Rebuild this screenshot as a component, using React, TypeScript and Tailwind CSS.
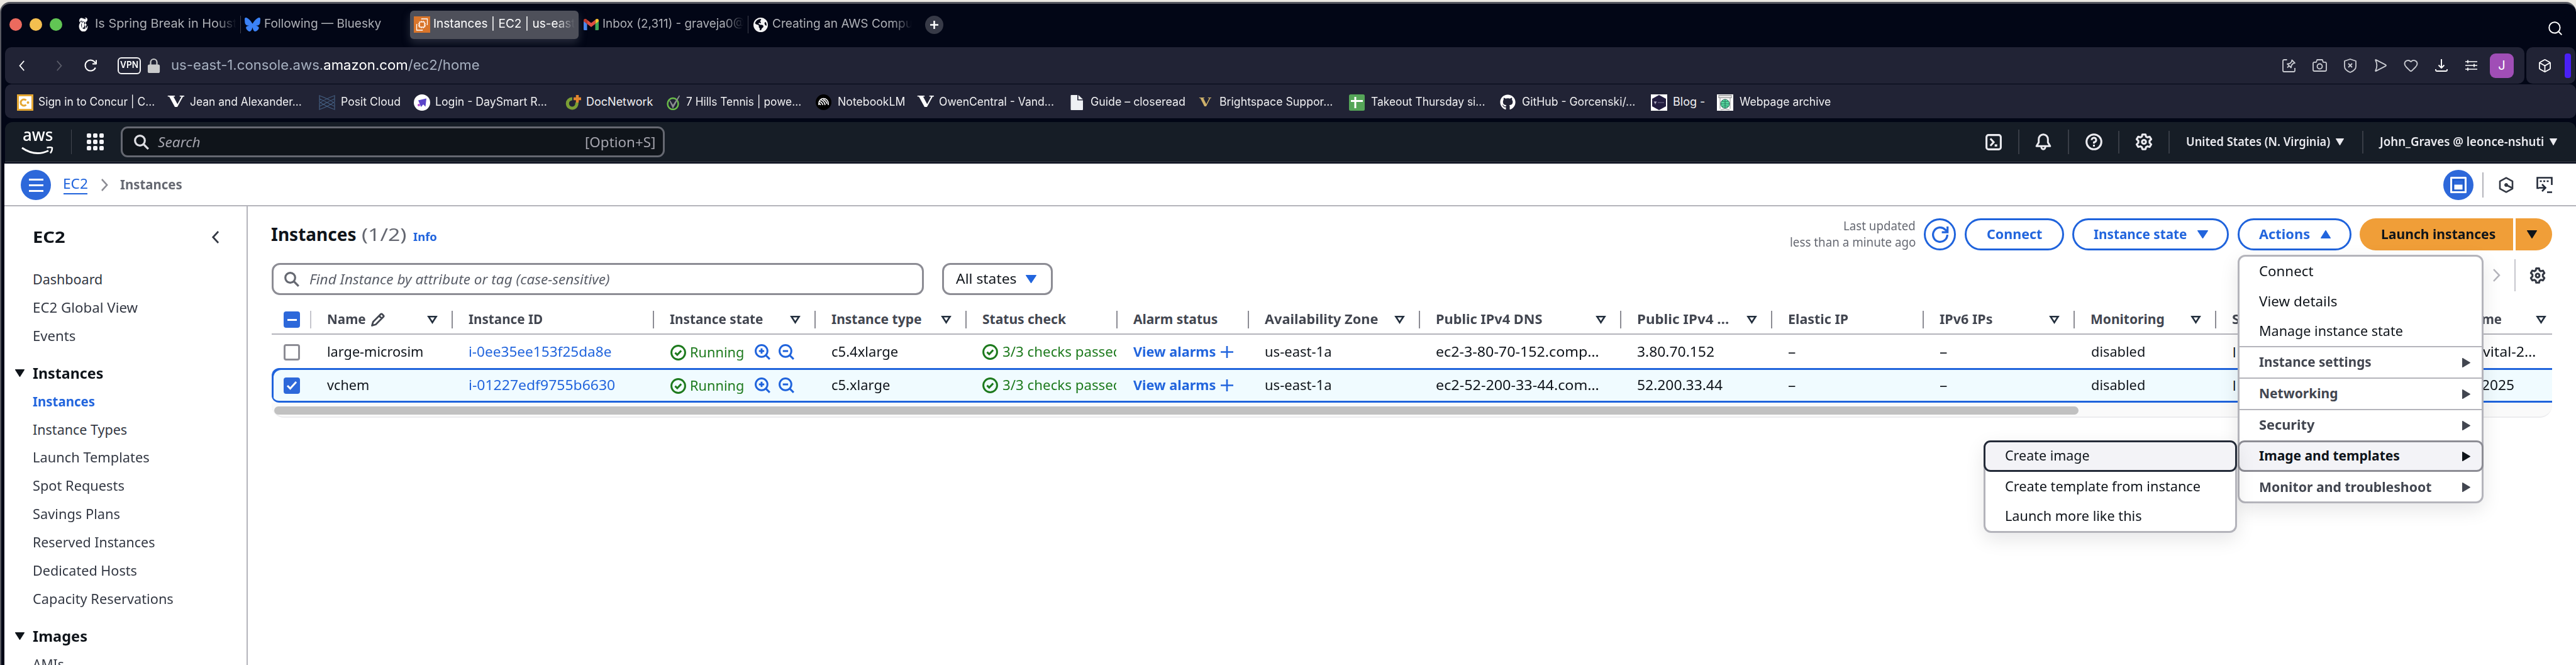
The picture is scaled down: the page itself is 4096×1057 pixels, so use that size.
import { useLayoutEffect, useRef, useState } from "react";
import type { ReactNode } from "react";
import clsx from "clsx";
import { FaBluesky, FaEarthAmericas } from "react-icons/fa6";
import { FaGithub } from "react-icons/fa";
import { SiNewyorktimes } from "react-icons/si";
import { Heart, Box, Search } from "lucide-react";

/* A single line of text condensed or widened to its box's width; the extra
   pixels make up for the side bearings of the first and last letters. */
function Fit({ className, children }: { className: string; children: ReactNode }) {
  const outer = useRef<HTMLSpanElement>(null);
  const inner = useRef<HTMLSpanElement>(null);
  const [scale, setScale] = useState(1);
  useLayoutEffect(() => {
    if (outer.current && inner.current) {
      const natural = inner.current.offsetWidth;
      if (natural > 0) setScale((outer.current.clientWidth + 2) / natural);
    }
  }, []);
  return (
    <span ref={outer} className={clsx("block shrink-0 whitespace-nowrap", className)}>
      <span ref={inner} className="relative -top-px -ml-px inline-block origin-left align-top" style={{ transform: `scaleX(${scale})` }}>
        {children}
      </span>
    </span>
  );
}

type IconProps = { className?: string };

function Svg({ className, box = "0 0 16 16", sw = 2, children }: { className?: string; box?: string; sw?: number; children: ReactNode }) {
  return (
    <svg viewBox={box} fill="none" stroke="currentColor" strokeWidth={sw} strokeLinejoin="round" preserveAspectRatio="none" className={clsx("shrink-0 overflow-visible", className)}>
      {children}
    </svg>
  );
}

const CaretDown = ({ className }: IconProps) => (
  <Svg className={className} box="0 0 12 10" sw={1}><path d="M.5.5h11L6 9.5z" fill="currentColor" /></Svg>
);
const CaretRight = ({ className }: IconProps) => (
  <Svg className={className} box="0 0 10 12" sw={1}><path d="M.5.5v11L9.5 6z" fill="currentColor" /></Svg>
);
const FilterCaret = ({ className }: IconProps) => (
  <Svg className={clsx("h-3 w-[15px] text-[#232f3e]", className)} box="0 0 15 12" sw={2.6}><path d="M1.5 1.3h12L7.5 10.5z" strokeLinejoin="miter" /></Svg>
);
const Magnifier = ({ className }: IconProps) => (
  <Svg className={className} box="0 0 24 24" sw={3.2}><circle cx="9.5" cy="9.5" r="7.8" /><path d="M15 15l7.8 7.8" /></Svg>
);
const Gear = ({ className, sw = 1.8 }: IconProps & { sw?: number }) => (
  <Svg className={className} box="0 0 16 16" sw={sw}>
    <path d="M6.6 1h2.8l.5 2 1.3.75 2-.6 1.4 2.4-1.5 1.45v1.9l1.5 1.5-1.4 2.4-2-.6-1.3.75-.5 2H6.6l-.5-2-1.3-.75-2 .6L1.4 10.4 2.9 8.9V7.05L1.4 5.55l1.4-2.4 2 .6L6.1 3z" />
    <circle cx="8" cy="8" r="1.8" />
  </Svg>
);
const CheckCircle = ({ className }: IconProps) => (
  <Svg className={clsx("h-[25px] w-[25px] text-[#1d7a1d]", className)} sw={1.9}>
    <circle cx="8" cy="8" r="7" /><path d="M4.8 8.1l2.2 2.2 4-4.3" />
  </Svg>
);
const Zoom = ({ plus, className }: { plus?: boolean; className?: string }) => (
  <Svg className={clsx("h-[25px] w-[25px] text-[#1f63dc]", className)} box="0 0 16 16" sw={1.9}>
    <circle cx="7" cy="7" r="6" /><path d="M11.3 11.3l4 4M4.3 7h5.4" />{plus && <path d="M7 4.3v5.4" />}
  </Svg>
);
const Refresh = ({ className }: IconProps) => (
  <Svg className={className} sw={2}><path d="M15 8a7 7 0 1 1-2-4.9L15 5.4" strokeLinejoin="miter" /><path d="M15.2 0v5.6H9.6" strokeLinejoin="miter" /></Svg>
);
const Chevron = ({ className, left, sw = 2.4 }: IconProps & { left?: boolean; sw?: number }) => (
  <Svg className={className} box="0 0 12 20" sw={sw}><path d={left ? "M11 1L2 10l9 9" : "M1 1l9 9-9 9"} strokeLinejoin="miter" /></Svg>
);

/* ---------- browser chrome ---------- */

function TabStrip() {
  return (
    <div className="flex h-[69px] items-center pb-[3px] pl-[15px] text-[19px] leading-[26px] text-[#aeb0b6]">
      <i className="size-5 rounded-full bg-[#ec6a5e]" />
      <i className="ml-3 size-5 rounded-full bg-[#f4bf4f]" />
      <i className="ml-3 size-5 rounded-full bg-[#61c554]" />
      <SiNewyorktimes className="ml-[25px] h-[22px] w-[17px] shrink-0 text-white" stroke="currentColor" strokeWidth="0.8" preserveAspectRatio="none" />
      <Fit className="ml-[11px] w-[224px] [mask-image:linear-gradient(to_right,black_86%,transparent)]">Is Spring Break in Houst</Fit>
      <i className="ml-[6px] h-7 w-px bg-[#3c3f4c]" />
      <FaBluesky className="ml-[6px] h-6 w-[25px] shrink-0 text-[#3b82f7]" />
      <Fit className="ml-[7px] w-[184px]">Following — Bluesky</Fit>
      <div className="ml-[47px] flex h-[45px] w-[268px] shrink-0 items-center rounded-md bg-[#4e505a] pl-[6px] text-white shadow-[0_6px_14px_rgba(110,115,130,0.35)]">
        <svg viewBox="0 0 26 26" className="size-[26px] shrink-0" fill="none" stroke="#fff" strokeWidth="1.3">
          <rect width="26" height="26" fill="#d9752b" stroke="none" />
          <rect x="9" y="9" width="8" height="8" /><path d="M12 9V7M15 9V7M12 19v-2M15 19v-2M9 12H7M9 15H7M19 12h-2M19 15h-2" />
          <path d="M12.5 5V4h9v9h-1M13.500 21v1h-9v-9h1" />
        </svg>
        <Fit className="ml-[6px] w-[224px] [mask-image:linear-gradient(to_right,black_86%,transparent)]">Instances | EC2 | us-east</Fit>
      </div>
      <svg viewBox="0 0 24 18" preserveAspectRatio="none" className="ml-2 h-[18px] w-6 shrink-0">
        <path d="M0 2.500V16.500Q0 18 1.500 18H5.500V8z" fill="#4a86ee" />
        <path d="M24 2.500V16.500Q24 18 22.500 18H18.500V8z" fill="#3fa757" />
        <path d="M18.500 1.500V8L24 4V2.500C24 0 21 -.8 19.500 .6z" fill="#f4bd2f" />
        <path d="M0 2.500V4l5.500 4V1.500L4.500.6C3 -.8 0 0 0 2.500z" fill="#bd3a2e" />
        <path d="M5.500 1.500L12 6.500l6.500-5V8L12 13 5.500 8z" fill="#dd4f43" />
      </svg>
      <Fit className="ml-[7px] w-[224px] [mask-image:linear-gradient(to_right,black_86%,transparent)]">Inbox (2,311) - graveja0@</Fit>
      <i className="ml-[6px] h-7 w-px bg-[#3c3f4c]" />
      <FaEarthAmericas className="ml-2 size-[23px] shrink-0 text-[#f2f2f3]" />
      <Fit className="ml-2 w-[221px] [mask-image:linear-gradient(to_right,black_86%,transparent)]">Creating an AWS Compu</Fit>
      <div className="ml-[21px] flex size-[29px] items-center justify-center rounded-full bg-[#373a47] text-white">
        <Svg className="size-[13px]" box="0 0 12 12" sw={2.4}><path d="M6 0v12M0 6h12" /></Svg>
      </div>
      <Search className="mr-5 ml-auto mt-3 size-[26px] text-white" strokeWidth={1.8} />
    </div>
  );
}

function AddressBar() {
  return (
    <div className="flex h-[58px] gap-[3px] pr-px pl-2 text-[#c9cbd1]">
      <div className="flex w-[4006px] items-center rounded-[10px] bg-[#212335] pr-[17px] pl-[22px]">
        <Chevron left className="h-[17px] w-[9px] text-white" sw={2.2} />
        <Chevron className="ml-[51px] h-[17px] w-[9px] text-[#5b5d6a]" sw={2.2} />
        <Svg className="ml-[35px] size-5 text-white" box="0 0 20 20" sw={2}><path d="M17.800 13.500A8.500 8.500 0 1 1 17.600 6.200" /><path d="M19 1.500v6h-6" /></Svg>
        <div className="ml-[33px] flex h-[27px] w-[37px] items-center justify-center rounded-[6px] border-2 border-[#f3f3f5] text-white">
          <Fit className="w-[27px] text-[15px] leading-[20px] font-semibold">VPN</Fit>
        </div>
        <Svg className="ml-[11px] h-[23px] w-[19px] text-[#c9cacb]" box="0 0 19 23" sw={2.2}><path d="M4.500 11V6a5 5 0 0 1 10 0v5" /><rect x="1" y="10.500" width="17" height="11.500" rx="1.500" fill="currentColor" /></Svg>
        <Fit className="ml-[19px] w-[489px] text-[21.500px] leading-[30px] text-[#a6b0c0]">us-east-1.console.aws.<span className="text-white">amazon.com</span>/ec2/home</Fit>
        <Svg className="ml-auto size-[21px]" box="0 0 21 21" sw={1.8}>
          <path d="M7.500 1H3Q1 1 1 3v15q0 2 2 2h15q2 0 2-2v-4" />
          <path d="M8 13.500l3.300-3.300M15.300 1.500l4.700 4.700-2.500.5-2.800 2.800-.8 4L8 7.600l4.200-.7 2.600-2.800z" />
        </Svg>
        <Svg className="ml-[27px] h-5 w-[23px]" box="0 0 23 20" sw={1.8}><path d="M3 4.800h3L7.300 1h8.400L17 4.800h3q2 0 2 2V17q0 2-2 2H3q-2 0-2-2V6.800q0-2 2-2z" /><circle cx="11.500" cy="11.500" r="4" /></Svg>
        <Svg className="ml-[27px] h-[23px] w-5" box="0 0 20 23" sw={1.8}><path d="M10 1l9 3v8.500c0 5-5 8-9 9.500-4-1.500-9-4.500-9-9.500V4z" /><path d="M7 8l6 6M13 8l-6 6" /></Svg>
        <Svg className="ml-[29px] h-5 w-[19px]" box="0 0 19 20" sw={1.8}><path d="M1.200 1.500Q1 .8 2 1.100L17 8.900Q19 10 17 11.100L2 18.900Q1 19.300 1.200 18.500Q5.500 10 1.200 1.500z" /></Svg>
        <Heart className="ml-[26px] h-[24px] w-[25px] shrink-0" strokeWidth={1.9} />
        <Svg className="ml-[26px] h-5 w-5 text-white" box="0 0 20 20" sw={1.9}><path d="M10 0v14M5.500 9.500L10 14l4.500-4.500M1 16v1.500Q1 19 2.500 19h15q1.500 0 1.500-1.500V16" /></Svg>
        <Svg className="ml-7 h-[18px] w-[19px] text-white" box="0 0 19 18" sw={1.7}><path d="M0 3h19M0 9h19M0 15h19M4 .5v5M14 6.500v5M4 12.500v5" /></Svg>
        <div className="ml-5 flex h-[39px] w-[38px] items-center justify-center rounded-[9px] bg-[#a04eb6] text-[20px] leading-none text-white">J</div>
      </div>
      <div className="flex w-[78px] items-center rounded-[10px] bg-[#212335] pl-[18px]">
        <Box className="size-[23px] shrink-0 text-white" strokeWidth={1.8} />
        <i className="ml-5 h-[39px] w-[10px] rounded-[4px] bg-[#4a20f5]" />
      </div>
    </div>
  );
}

function BookmarksBar() {
  return (
    <div className="mt-px ml-2 flex h-[54px] items-center rounded-[10px] bg-[#212335] pt-[3px] pl-[19px] text-[18px] leading-[26px] text-[#f0f0f2]">
      <svg viewBox="0 0 26 26" className="size-[26px] shrink-0" fill="none"><rect x="1.500" y="1.500" width="23" height="23" fill="#fff" stroke="#e5a733" strokeWidth="3" /><path d="M14.500 9.500A5 5 0 1 0 14.500 16.500" stroke="#e5a733" strokeWidth="3" /><circle cx="17.500" cy="13" r="2" fill="#e5a733" /></svg>
      <Fit className="ml-[9px] w-[183px]">Sign in to Concur | C...</Fit>
      <Fit className="ml-[23px] w-[23px] font-['DejaVu_Serif'] text-[25px] font-bold text-white">V</Fit>
      <Fit className="ml-3 w-[176px]">Jean and Alexander...</Fit>
      <svg viewBox="0 0 26 24" className="ml-7 h-6 w-[26px] shrink-0" fill="none" stroke="#41597a" strokeWidth="1.300"><path d="M1 1q12 4 24 12v10q-12-4-24-12zM25 1Q13 5 1 13v10q12-4 24-12zM1 6l24 12M25 6L1 18" /></svg>
      <Fit className="ml-[10px] w-[93px]">Posit Cloud</Fit>
      <svg viewBox="0 0 26 26" className="ml-[22px] size-[26px] shrink-0"><circle cx="13" cy="13" r="13" fill="#fff" /><path d="M7 9.500L20 6.500 18.500 19.500 15 16 11.500 20z" fill="#5b45c9" /><circle cx="8" cy="17" r="2" fill="#b34ed0" /></svg>
      <Fit className="ml-[9px] w-[176px]">Login - DaySmart R...</Fit>
      <svg viewBox="0 0 25 24" className="ml-[30px] h-6 w-[25px] shrink-0" fill="none"><path d="M11 6A7.500 7.500 0 1 0 18 11.500" stroke="#7b9f35" strokeWidth="5" /><path d="M19 0v12M13 6h12" stroke="#e3862f" strokeWidth="4.500" /></svg>
      <Fit className="ml-[9px] w-[104px]">DocNetwork</Fit>
      <svg viewBox="0 0 21 24" className="ml-[23px] h-6 w-[21px] shrink-0" fill="none"><ellipse cx="10" cy="14" rx="8.500" ry="9" stroke="#6cc04a" strokeWidth="2.400" /><path d="M5 9l5 8L20.500 1 10 20z" stroke="#8a8d90" strokeWidth="1.500" fill="#8a8d90" /></svg>
      <Fit className="ml-[11px] w-[181px]">7 Hills Tennis | powe...</Fit>
      <svg viewBox="0 0 25 25" className="ml-6 size-[25px] shrink-0" fill="none" stroke="#fff" strokeWidth="1.600"><circle cx="12.500" cy="12.500" r="12.500" fill="#000" stroke="none" /><path d="M5 17v-3a7.500 7.500 0 0 1 15 0v3M8 17a6 6 0 0 0-3-3M11.500 17A8.500 8.500 0 0 0 5.500 11M15 17a11 11 0 0 0-7-8.500M18 15a11 11 0 0 0-6-7" /></svg>
      <Fit className="ml-[11px] w-[106px]">NotebookLM</Fit>
      <Fit className="ml-[21px] w-[23px] font-['DejaVu_Serif'] text-[25px] font-bold text-white">V</Fit>
      <Fit className="ml-[11px] w-[181px]">OwenCentral - Vand...</Fit>
      <svg viewBox="0 0 20 24" className="ml-[27px] h-6 w-5 shrink-0"><path d="M.5 1q0-1 1-1H11v8.500h9V23q0 1-1 1H1.500q-1 0-1-1z" fill="#eef1f4" /><path d="M12.700 0L20 7h-7.300z" fill="#eef1f4" /></svg>
      <Fit className="ml-[13px] w-[149px]">Guide – closeread</Fit>
      <Fit className="ml-6 w-[17px] font-['DejaVu_Serif'] text-[19px] font-bold text-[#cdb06a]">V</Fit>
      <Fit className="ml-[15px] w-[178px]">Brightspace Suppor...</Fit>
      <svg viewBox="0 0 25 26" className="ml-[27px] h-[26px] w-[25px] shrink-0"><rect width="25" height="26" rx="2.500" fill="#55a558" /><path d="M10 4v18M3 10.500h19" stroke="#fff" strokeWidth="3" /></svg>
      <Fit className="ml-[11px] w-[179px]">Takeout Thursday si...</Fit>
      <FaGithub className="ml-[25px] size-[25px] shrink-0 text-white" />
      <Fit className="ml-[11px] w-[178px]">GitHub - Gorcenski/...</Fit>
      <svg viewBox="0 0 26 26" className="ml-[26px] size-[26px] shrink-0"><rect width="26" height="26" fill="#fff" /><path d="M13 1l11 6v12l-11 6-11-6V7z" fill="#221d3f" /><path d="M5 11.500h4l-2 4zM11 13h10" stroke="#77728f" fill="#c8c5d6" /></svg>
      <Fit className="ml-[10px] w-[49px]">Blog -</Fit>
      <svg viewBox="0 0 26 26" className="ml-5 size-[26px] shrink-0" fill="none" stroke="#8b8b8b"><rect width="26" height="26" fill="#fff" stroke="none" /><rect x="3" y="1.500" width="20" height="4" fill="#e4e4e4" /><path d="M5 6v17M21 6v17M6 24.500q7-3 14 0" /><circle cx="13" cy="15" r="7" fill="#57dca0" stroke="#1f5f50" /><path d="M13 8v14M6 15h14M8 11q5 2 10 0M8 19q5-2 10 0" stroke="#1f5f50" strokeWidth=".8" /></svg>
      <Fit className="ml-[11px] w-[143px]">Webpage archive</Fit>
    </div>
  );
}

/* ---------- AWS console ---------- */

function ConsoleHeader() {
  return (
    <div className="mt-[6px] ml-2 flex h-[64px] items-center rounded-t-[12px] border-b border-[#424650] bg-[#161d26] pl-[26px] text-[20px] leading-[28px] font-bold text-[#ebebf0]">
      <div className="flex h-[50px] w-[51px] shrink-0 flex-col items-center text-white">
        <Fit className="-mt-[3px] w-[46px] text-[27px] leading-[34px] font-medium">aws</Fit>
        <svg viewBox="0 0 51 13" className="mt-px h-[13px] w-[51px]" fill="none" stroke="currentColor" strokeWidth="3"><path d="M1 2q21 14.500 42 4.500" /><path d="M40.500 1.800q6-1.600 8.500.2 0 5-3 8.500" strokeWidth="2.400" /></svg>
      </div>
      <i className="ml-7 h-[39px] w-px bg-[#424650]" />
      <div className="ml-6 grid size-[27px] shrink-0 grid-cols-3 gap-[3px]">
        {Array.from({ length: 9 }, (_, i) => <i key={i} className="rounded-[2px] bg-[#f3f3f7]" />)}
      </div>
      <div className="ml-[27px] flex h-[49px] w-[865px] shrink-0 items-center rounded-[11px] border-[3px] border-[#656871] bg-[#0f141a] pr-[13px] pl-[18px] font-normal text-[#a4a4ad]">
        <Magnifier className="size-6 text-[#dedee3]" />
        <Fit className="ml-[15px] w-[66px] text-[22px] italic">Search</Fit>
        <Fit className="ml-auto w-[110px] text-[22px]">[Option+S]</Fit>
      </div>
      <div className="mr-[30px] ml-auto flex items-center">
        <Svg className="size-[26px]" sw={1.9}><rect x="1" y="1" width="14" height="14" rx="2" /><path d="M4.800 4.500L8 8l-3.200 3.500" strokeLinejoin="miter" /><path d="M9 11.200h2.500" strokeWidth="2.200" /></Svg>
        <i className="ml-[26px] h-[39px] w-[2px] bg-[#383d46]" />
        <Svg className="ml-[25px] h-[27px] w-[26px]" sw={1.800}><path d="M8 1a4.500 4.500 0 0 0-4.500 4.500V8.500L1.300 12h13.400l-2.200-3.500v-3A4.500 4.500 0 0 0 8 1z" /><path d="M6 12.500a2 2.500 0 0 0 4 0" /></Svg>
        <i className="ml-[26px] h-[39px] w-[2px] bg-[#383d46]" />
        <Svg className="ml-[26px] size-[27px]" sw={1.800}><circle cx="8" cy="8" r="7" /><path d="M5.900 6.300A2.100 2.100 0 1 1 8 8.300v1.300M8 10.700v1.700" /></Svg>
        <i className="ml-[25px] h-[36px] w-[2px] bg-[#383d46]" />
        <Gear className="ml-[25px] h-[27px] w-[28px]" />
        <i className="ml-[25px] h-[36px] w-[2px] bg-[#383d46]" />
        <Fit className="ml-[27px] w-[227px] font-semibold">United States (N. Virginia)</Fit>
        <CaretDown className="ml-[10px] h-[11px] w-[13px]" />
        <i className="ml-[29px] h-[36px] w-[2px] bg-[#383d46]" />
        <Fit className="ml-[27px] w-[259px] font-semibold">John_Graves @ leonce-nshuti</Fit>
        <CaretDown className="ml-[10px] h-[11px] w-[12px]" />
      </div>
    </div>
  );
}

function Breadcrumbs() {
  return (
    <div className="flex h-[68px] items-center border-b-2 border-[#b4b4bb] pt-[2px] pl-[26px] text-[21px] leading-[28px]">
      <div className="flex size-[48px] shrink-0 flex-col items-center justify-center gap-[6px] rounded-full bg-[#2d68da]">
        <i className="h-[3px] w-[23px] bg-white" /><i className="h-[3px] w-[23px] bg-white" /><i className="h-[3px] w-[23px] bg-white" />
      </div>
      <Fit className="ml-5 w-[38px] border-b-2 border-[#1f63dc] text-[#1f63dc]">EC2</Fit>
      <Chevron className="ml-[22px] h-5 w-[11px] text-[#8c8c94]" sw={2.600} />
      <Fit className="ml-5 w-[97px] font-bold text-[#656871]">Instances</Fit>
      <div className="ml-auto flex size-[48px] shrink-0 items-center justify-center rounded-full bg-[#2d68da] text-white">
        <Svg className="size-[26px]" box="0 0 26 26" sw={3}><rect x="1.500" y="1.500" width="23" height="23" /><rect x="6.500" y="12.500" width="13" height="8" fill="#fff" strokeWidth="0" /><path d="M5 5h16v16H5z" strokeWidth="1" stroke="#1450b8" /></Svg>
      </div>
      <i className="ml-[14px] h-[40px] w-[2px] bg-[#b4b4bb]" />
      <Svg className="ml-6 h-[26px] w-6 text-[#333843]" box="0 0 24 26" sw={2.6}><path d="M12 1.700l10 5.500v11.600l-10 5.500-10-5.500V7.200z" /><circle cx="12" cy="13" r="2.500" fill="currentColor" strokeWidth="1" /><path d="M12 13l9 4.500" /></Svg>
      <Svg className="mr-[37px] ml-[36px] size-[26px] text-[#232a38]" box="0 0 26 26" sw={2.600}><path d="M24.500 13V1.500h-23V18H4" strokeLinejoin="miter" /><path d="M5.500 7h3M11 7h3M16.500 7h3" /><path d="M4 17.500h9M9 12l5.500 5.500L9 23M17 24.500h8" strokeLinejoin="miter" /></Svg>
    </div>
  );
}

function NavItem({ w, active, children }: { w: string; active?: boolean; children: ReactNode }) {
  return (
    <div className={clsx("flex h-[44.9px] items-center", active ? "font-bold text-[#2265dd]" : "text-[#333843]")}>
      <Fit className={w}>{children}</Fit>
    </div>
  );
}

function NavHeading({ w, children }: { w: string; children: ReactNode }) {
  return (
    <div className="mt-[14px] flex h-[45px] items-center text-[23px] font-bold text-[#0f141a]">
      <CaretDown className="-ml-[29px] mb-[2px] h-3 w-[15px]" />
      <Fit className={clsx("ml-[14px]", w)}>{children}</Fit>
    </div>
  );
}

function Sidebar() {
  return (
    <nav className="w-[387px] shrink-0 border-r-2 border-[#b4b4bb] pl-[46px] text-[21.500px] leading-[28px]">
      <div className="mt-[28px] mb-[22.500px] flex h-11 items-center justify-between pr-[44px]">
        <Fit className="w-[49px] text-[24.500px] font-bold text-[#0f141a]">EC2</Fit>
        <Chevron left className="mb-[3px] h-5 w-[11px] text-[#333843]" sw={3} />
      </div>
      <NavItem w="w-[109px]">Dashboard</NavItem>
      <NavItem w="w-[165px]">EC2 Global View</NavItem>
      <NavItem w="w-[66px]">Events</NavItem>
      <NavHeading w="w-[110px]">Instances</NavHeading>
      <NavItem w="w-[97px]" active>Instances</NavItem>
      <NavItem w="w-[148px]">Instance Types</NavItem>
      <NavItem w="w-[184px]">Launch Templates</NavItem>
      <NavItem w="w-[144px]">Spot Requests</NavItem>
      <NavItem w="w-[137px]">Savings Plans</NavItem>
      <NavItem w="w-[192px]">Reserved Instances</NavItem>
      <NavItem w="w-[164px]">Dedicated Hosts</NavItem>
      <NavItem w="w-[222px]">Capacity Reservations</NavItem>
      <NavHeading w="w-[85px]">Images</NavHeading>
      <NavItem w="w-[48px]">AMIs</NavItem>
    </nav>
  );
}

const pill = "flex h-[51px] shrink-0 items-center rounded-full border-[3px] border-[#1f63dc] bg-white text-[#2265dd]";

function MenuGroup({ w, children }: { w: string; children: ReactNode }) {
  return (
    <div className="flex h-[50px] items-center justify-between border-t-2 border-[#b4b4bb] pr-[18px] pl-8 font-bold text-[#424650]">
      <Fit className={w}>{children}</Fit>
      <CaretRight className="h-[15px] w-[13px]" />
    </div>
  );
}

function ActionsMenu() {
  return (
    <div className="absolute top-[58px] left-0 z-10 flex h-[395px] w-[391px] flex-col rounded-[12px] border-[3px] border-[#b4b4bb] bg-white text-[21px] leading-[28px] font-normal text-[#0f141a] shadow-[0_10px_30px_rgba(0,7,22,0.1)]">
      <div className="flex h-12 items-center pl-8"><Fit className="w-[84px]">Connect</Fit></div>
      <div className="flex h-12 items-center pl-8"><Fit className="w-[122px]">View details</Fit></div>
      <div className="flex h-[46px] items-center pl-8"><Fit className="w-[227px]">Manage instance state</Fit></div>
      <MenuGroup w="w-[177px]">Instance settings</MenuGroup>
      <MenuGroup w="w-[123px]">Networking</MenuGroup>
      <MenuGroup w="w-[86px]">Security</MenuGroup>
      <div className="relative -mx-[3px] flex h-[50px] items-center justify-between rounded-[11px] border-[3px] border-[#8c8c94] bg-[#f3f3f7] pr-[18px] pl-8 font-bold">
        <Fit className="w-[222px]">Image and templates</Fit>
        <CaretRight className="h-[15px] w-[13px]" />
        <div className="absolute -top-[3px] right-[calc(100%+4px)] w-[403px] rounded-[12px] border-[3px] border-t-0 border-[#b4b4bb] bg-white font-normal shadow-[0_10px_30px_rgba(0,7,22,0.1)]">
          <div className="-mx-[3px] flex h-[50px] items-center rounded-[11px] border-[3px] border-[#232a38] bg-[#f3f3f7] pl-[32px]"><Fit className="w-[133px]">Create image</Fit></div>
          <div className="flex h-12 items-center pl-[32px]"><Fit className="w-[309px]">Create template from instance</Fit></div>
          <div className="flex h-[46px] items-center pl-[32px]"><Fit className="w-[216px]">Launch more like this</Fit></div>
        </div>
      </div>
      <div className="flex h-[47px] items-center justify-between pt-[2px] pr-[18px] pl-8 font-bold text-[#424650]">
        <Fit className="w-[272px]">Monitor and troubleshoot</Fit>
        <CaretRight className="h-[15px] w-[13px]" />
      </div>
    </div>
  );
}

const cols =
  "grid grid-cols-[61px_225px_320px_257px_240px_240px_209px_272px_320px_240px_241px_240px_225px_425px_1fr]";

function Head({ w, title, filter, light, extra }: { w: string; title: string; filter?: boolean; light?: boolean; extra?: ReactNode }) {
  return (
    <div className="flex items-center pr-[23px]">
      <i className={clsx("h-[28px] w-[2px] shrink-0", light ? "bg-[#c6c6cd]" : "bg-[#8c8c94]")} />
      <Fit className={clsx("ml-[26px]", w)}>{title}</Fit>
      {extra}
      {filter && <FilterCaret className="ml-auto" />}
    </div>
  );
}

type Instance = {
  name: string; nameW: string; id: string; idW: string; type: string; typeW: string;
  dns: string; ip: string; ipW: string; last: string; lastW: string; selected?: boolean;
};

const instances: Instance[] = [
  { name: "large-microsim", nameW: "w-[151px]", id: "i-0ee35ee153f25da8e", idW: "w-[225px]", type: "c5.4xlarge", typeW: "w-[104px]", dns: "ec2-3-80-70-152.comp…", ip: "3.80.70.152", ipW: "w-[121px]", last: "vital-2…", lastW: "w-[82px] mr-[27px]" },
  { name: "vchem", nameW: "w-[65px]", id: "i-01227edf9755b6630", idW: "w-[231px]", type: "c5.xlarge", typeW: "w-[91px]", dns: "ec2-52-200-33-44.com…", ip: "52.200.33.44", ipW: "w-[134px]", last: "2025", lastW: "w-[50px] mr-[62px]", selected: true },
];

function Row({ it }: { it: Instance }) {
  return (
    <div
      className={clsx(
        cols,
        "items-center",
        it.selected ? "h-[55px] rounded-l-[12px] bg-[#f0fbff] shadow-[inset_3px_3px_0_#1f63dc,inset_0_-3px_0_#1f63dc]" : "h-[53px] pt-[2px]",
      )}
    >
      <div className="pl-[19px]">
        {it.selected ? (
          <div className="flex size-[26px] items-center justify-center rounded-[4px] bg-[#2d68da] text-white"><Svg className="h-[13px] w-4" box="0 0 16 13" sw={3}><path d="M1 7l4.500 4.500L15 1" strokeLinejoin="miter" /></Svg></div>
        ) : (
          <div className="size-[26px] rounded-[4px] border-[3px] border-[#8c8c94] bg-white" />
        )}
      </div>
      <div className="pl-7"><Fit className={it.nameW}>{it.name}</Fit></div>
      <div className="pl-7 text-[#2265dd]"><Fit className={it.idW}>{it.id}</Fit></div>
      <div className="flex items-center pl-7 text-[#1d7a1d]">
        <CheckCircle className="mt-[2px]" /><Fit className="mt-[2px] ml-[7px] w-[84px]">Running</Fit>
        <Zoom plus className="ml-[18px]" /><Zoom className="ml-[13px]" />
      </div>
      <div className="pl-7"><Fit className={it.typeW}>{it.type}</Fit></div>
      <div className="flex items-center overflow-hidden pl-[27px] text-[#1d7a1d]"><CheckCircle /><Fit className="ml-2 w-[188px]">3/3 checks passed</Fit></div>
      <div className="flex items-center pl-7 font-bold text-[#2265dd]">
        <Fit className="w-[129px]">View alarms</Fit>
        <Svg className="ml-[9px] h-[19px] w-5" box="0 0 20 20" sw={2.600}><path d="M10 0v20M0 10h20" /></Svg>
      </div>
      <div className="pl-7"><Fit className="w-[105px]">us-east-1a</Fit></div>
      <div className="pl-7"><Fit className="w-[258px]">{it.dns}</Fit></div>
      <div className="pl-7"><Fit className={it.ipW}>{it.ip}</Fit></div>
      <div className="pl-7"><Fit className="w-[11px]">–</Fit></div>
      <div className="pl-7"><Fit className="w-[11px]">–</Fit></div>
      <div className="pl-[29px]"><Fit className="w-[84px]">disabled</Fit></div>
      <div className="pl-7">l</div>
      <div className="flex justify-end"><Fit className={it.lastW}>{it.last}</Fit></div>
    </div>
  );
}

function InstancesPanel() {
  return (
    <main className="min-w-0 flex-1 pr-[38px] pl-[38px] text-[21px] leading-[28px] text-[#0f141a]">
      <div className="mt-[19px] flex h-[51px] items-center">
        <Fit className="w-[134px] text-[28px] leading-[36px] font-bold">Instances</Fit>
        <Fit className="ml-[10px] w-[69px] text-[28px] leading-[36px] text-[#656871]">(1/2)</Fit>
        <Fit className="mt-[8px] ml-[13px] w-[36px] text-[18px] leading-[24px] font-bold text-[#2265dd]">Info</Fit>
        <div className="mt-px ml-auto flex flex-col items-end text-[20px] leading-[26px] text-[#656871]">
          <Fit className="w-[113px]">Last updated</Fit>
          <Fit className="w-[198px]">less than a minute ago</Fit>
        </div>
        <div className={clsx(pill, "ml-[14px] w-[51px] justify-center")}><Refresh className="size-[26px]" /></div>
        <div className={clsx(pill, "ml-[14px] w-[158px] pl-[33px] font-bold")}><Fit className="w-[86px]">Connect</Fit></div>
        <div className={clsx(pill, "ml-[13px] w-[249px] pl-[32px] font-bold")}><Fit className="w-[146px]">Instance state</Fit><CaretDown className="ml-[18px] h-[13px] w-[17px]" /></div>
        <div className="relative ml-[14px] shrink-0">
          <div className={clsx(pill, "w-[181px] pl-[32px] font-bold")}><Fit className="w-[79px]">Actions</Fit><CaretDown className="ml-[18px] h-[13px] w-[16px] rotate-180" /></div>
          <ActionsMenu />
        </div>
        <div className="ml-[13px] flex h-[51px] w-[244px] shrink-0 items-center rounded-l-full bg-[#f09e38] pl-[35px] font-bold"><Fit className="w-[180px]">Launch instances</Fit></div>
        <div className="ml-1 flex h-[51px] w-[58px] shrink-0 items-center rounded-r-full bg-[#f09e38] pl-[18px]"><CaretDown className="h-[13px] w-[16px]" /></div>
      </div>

      <div className="mt-5 flex h-[51px] items-center">
        <div className="flex h-[51px] w-[1037px] items-center rounded-[13px] border-[3px] border-[#8c8c94] pl-[17px] text-[#5a5e68]">
          <Magnifier className="size-6 text-[#656871]" />
          <Fit className="ml-[17px] w-[476px] text-[22px] italic">Find Instance by attribute or tag (case-sensitive)</Fit>
        </div>
        <div className="ml-[29px] flex h-[51px] w-[176px] items-center rounded-[13px] border-[3px] border-[#8c8c94] pl-[20px]">
          <Fit className="w-[95px]">All states</Fit>
          <CaretDown className="ml-[15px] h-[13px] w-[17px] text-[#2265dd]" />
        </div>
        <Chevron className="mb-3 ml-auto h-[21px] w-3 text-[#b4b4bb]" />
        <i className="mb-3 ml-[22px] h-[51px] w-[2px] bg-[#c6c6cd]" />
        <Gear className="mr-[10px] mb-3 ml-[22px] size-[26px] text-[#333843]" sw={1.900} />
      </div>

      <div className={clsx(cols, "mt-[17px] h-[46px] border-b-2 border-[#b4b4bb] font-bold text-[#424650]")}>
        <div className="flex items-center pl-[19px]"><div className="flex size-[26px] items-center justify-center rounded-[4px] bg-[#2d68da]"><i className="h-[3px] w-[15px] bg-white" /></div></div>
        <Head title="Name" w="w-[60px]" light filter extra={<Svg className="ml-[9px] size-[22px]" box="0 0 22 22" sw={2.700}><path d="M1.500 20.500l1.800-6L15.500 2.300q1-1 2 0l2.200 2.200q1 1 0 2L7.500 18.700zM12.800 5l4.200 4.200" /></Svg>} />
        <Head title="Instance ID" w="w-[116px]" />
        <Head title="Instance state" w="w-[146px]" filter />
        <Head title="Instance type" w="w-[141px]" filter />
        <Head title="Status check" w="w-[131px]" />
        <Head title="Alarm status" w="w-[132px]" />
        <Head title="Availability Zone" w="w-[178px]" filter />
        <Head title="Public IPv4 DNS" w="w-[167px]" filter />
        <Head title="Public IPv4 …" w="w-[144px]" filter />
        <Head title="Elastic IP" w="w-[94px]" />
        <Head title="IPv6 IPs" w="w-[82px]" filter />
        <Head title="Monitoring" w="w-[116px]" filter />
        <Head title="S" w="w-[11px]" />
        <div className="flex items-center justify-end pr-3"><Fit className="w-[30px]">me</Fit><FilterCaret className="ml-[56px]" /></div>
      </div>
      {instances.map((it) => <Row key={it.id} it={it} />)}
      <div className="h-[24px] rounded-b-[20px] border-b-2 border-[#ececee] bg-[#fafafa] pt-[6px] pl-[4px]">
        <div className="h-[13px] w-[2869px] rounded-full bg-[#c1c1c1]" />
      </div>
    </main>
  );
}

export default function App() {
  return (
    <div className="h-[1057px] w-[4096px] overflow-hidden bg-[#ebe8e2] pt-[3px] font-[Inter,sans-serif]">
      <div className="flex h-[1054px] flex-col rounded-t-[16px] border-t-[3px] border-l-[2px] border-[#575961] bg-[#020616]">
        <div className="-ml-[2px]">
          <TabStrip />
          <AddressBar />
          <BookmarksBar />
        </div>
        <div className="-ml-[2px] flex min-h-0 flex-1 flex-col font-['Noto_Sans',sans-serif]">
          <ConsoleHeader />
          <div className="mt-[2px] ml-[7px] flex min-h-0 flex-1 flex-col overflow-hidden bg-white">
            <Breadcrumbs />
            <div className="flex min-h-0 flex-1">
              <Sidebar />
              <InstancesPanel />
            </div>
          </div>
        </div>
      </div>
    </div>
  );
}
